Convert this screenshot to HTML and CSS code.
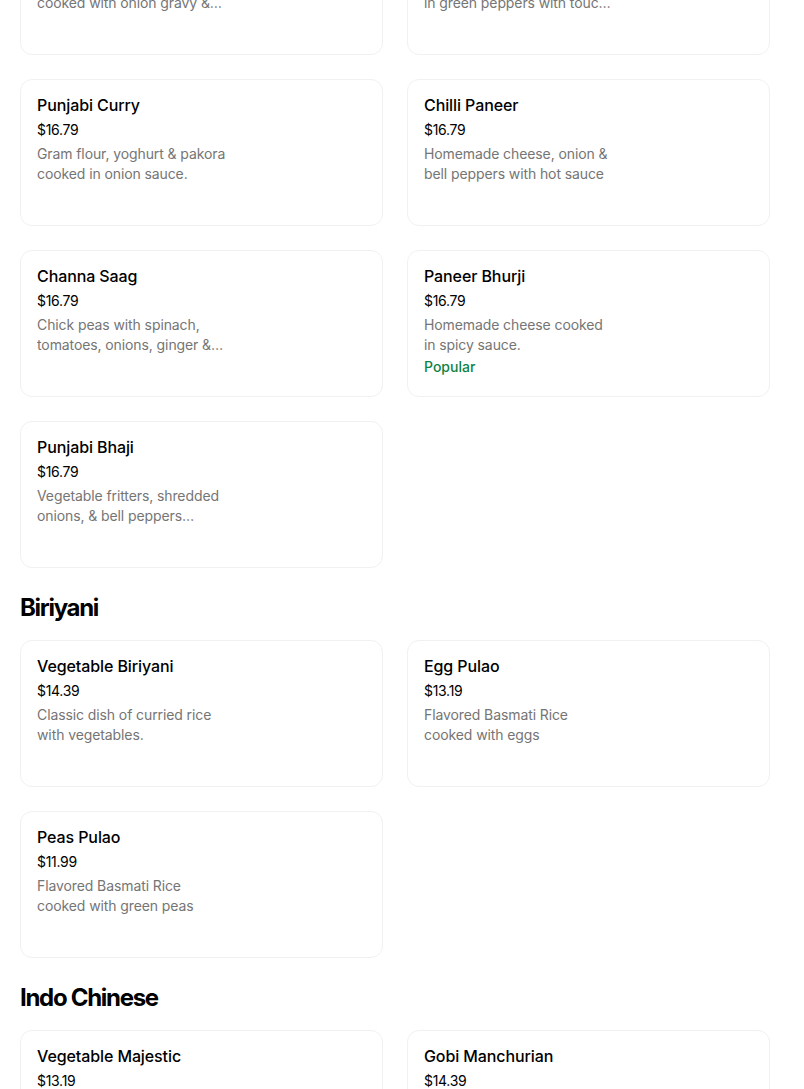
FILE: index.html
```html
<!DOCTYPE html>
<html lang="en">
<head>
<meta charset="utf-8">
<title>Menu</title>
<link rel="stylesheet" href="styles.css">
</head>
<body>
<main class="menu">
  <section class="section first">
    <div class="grid">
      <div class="card">
        <div class="name">Aloo Mutter</div>
        <div class="price">$16.79</div>
        <div class="desc">Mixed vegetables &amp; potatoes cooked with onion gravy &amp; spices and fresh herbs</div>
      </div>
      <div class="card">
        <div class="name">Paneer Jalfrezi</div>
        <div class="price">$16.79</div>
        <div class="desc">Homemade cheese cooked in green peppers with touch of spices</div>
      </div>
      <div class="card">
        <div class="name">Punjabi Curry</div>
        <div class="price">$16.79</div>
        <div class="desc">Gram flour, yoghurt &amp; pakora cooked in onion sauce.</div>
      </div>
      <div class="card">
        <div class="name">Chilli Paneer</div>
        <div class="price">$16.79</div>
        <div class="desc">Homemade cheese, onion &amp; bell peppers with hot sauce</div>
      </div>
      <div class="card">
        <div class="name">Channa Saag</div>
        <div class="price">$16.79</div>
        <div class="desc">Chick peas with spinach, tomatoes, onions, ginger &amp; garlic.</div>
      </div>
      <div class="card">
        <div class="name">Paneer Bhurji</div>
        <div class="price">$16.79</div>
        <div class="desc">Homemade cheese cooked in spicy sauce.</div>
        <div class="tag">Popular</div>
      </div>
      <div class="card">
        <div class="name">Punjabi Bhaji</div>
        <div class="price">$16.79</div>
        <div class="desc">Vegetable fritters, shredded onions, &amp; bell peppers cooked with spices.</div>
      </div>
    </div>
  </section>

  <section class="section">
    <h2 class="heading">Biriyani</h2>
    <div class="grid">
      <div class="card">
        <div class="name">Vegetable Biriyani</div>
        <div class="price">$14.39</div>
        <div class="desc">Classic dish of curried rice with vegetables.</div>
      </div>
      <div class="card">
        <div class="name">Egg Pulao</div>
        <div class="price">$13.19</div>
        <div class="desc">Flavored Basmati Rice cooked with eggs</div>
      </div>
      <div class="card">
        <div class="name">Peas Pulao</div>
        <div class="price">$11.99</div>
        <div class="desc">Flavored Basmati Rice cooked with green peas</div>
      </div>
    </div>
  </section>

  <section class="section">
    <h2 class="heading">Indo Chinese</h2>
    <div class="grid">
      <div class="card">
        <div class="name">Vegetable Majestic</div>
        <div class="price">$13.19</div>
        <div class="desc">Crispy vegetables tossed in spicy sauce.</div>
      </div>
      <div class="card">
        <div class="name">Gobi Manchurian</div>
        <div class="price">$14.39</div>
        <div class="desc">Cauliflower fritters tossed in manchurian sauce.</div>
      </div>
    </div>
  </section>
</main>
</body>
</html>
```

FILE: styles.css
```css
html, body {
  margin: 0;
  padding: 0;
  background: #ffffff;
  overflow: hidden;
}

body {
  font-family: Inter, "Noto Sans", "Liberation Sans", sans-serif;
  color: #000000;
}

.menu {
  width: 750px;
  padding: 0 34px 0 20px;
  margin-top: -92px;
}

.section + .section {
  margin-top: 24px;
}

.heading {
  margin: 0 0 16px 0;
  font-size: 24px;
  line-height: 32px;
  font-weight: 700;
  letter-spacing: -1.3px;
}

.grid {
  display: grid;
  grid-template-columns: 363px 363px;
  gap: 24px;
}

.card {
  box-sizing: border-box;
  height: 147px;
  border: 1px solid #f1f1f1;
  border-radius: 12px;
  padding: 15px 16px;
}

.name {
  font-size: 16px;
  line-height: 20px;
  font-weight: 500;
  letter-spacing: -0.1px;
}

.price {
  margin-top: 5px;
  font-size: 14px;
  line-height: 20px;
  letter-spacing: -0.3px;
}

.desc {
  margin-top: 4px;
  max-width: 190px;
  font-size: 14px;
  line-height: 20px;
  color: #757575;
  letter-spacing: -0.1px;
  display: -webkit-box;
  -webkit-line-clamp: 2;
  -webkit-box-orient: vertical;
  overflow: hidden;
}

.tag {
  margin-top: 2px;
  font-size: 14px;
  line-height: 20px;
  font-weight: 500;
  color: #0e8345;
}
```
